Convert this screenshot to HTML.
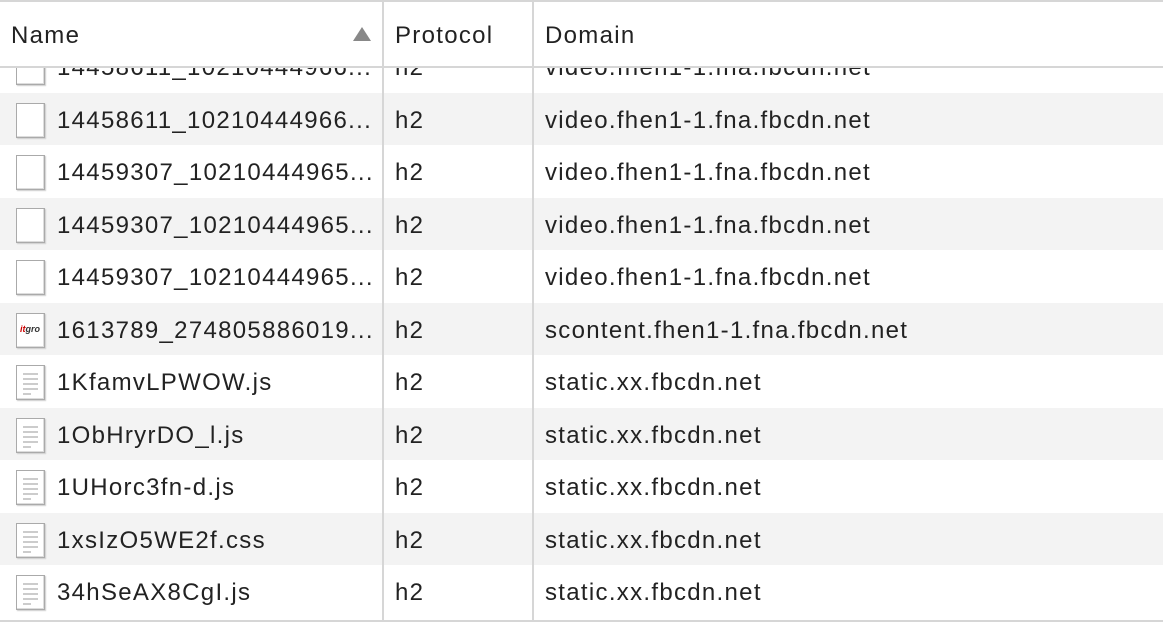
<!DOCTYPE html>
<html><head><style>
body{margin:0;width:1163px;height:625px;overflow:hidden;background:#fff;font-family:"Segoe UI","Liberation Sans",sans-serif;font-size:24px;letter-spacing:1.3px;color:#222;position:relative}
.top{position:absolute;left:0;top:0;width:1163px;height:2px;background:#d6d6d6}
.hdr{position:absolute;left:0;top:2px;width:1163px;height:64px;border-bottom:2px solid #d6d6d6;background:#fff;z-index:2}
.hdr span{position:absolute;top:20px}
.vl{position:absolute;top:2px;width:2px;height:620px;background:#d6d6d6;z-index:3}
.row{position:absolute;left:0;width:1163px;height:52.6px}
.g{background:#f3f3f3}
.row span{position:absolute;top:14px;white-space:nowrap}
.ic{position:absolute;left:16px;top:10px;width:29px;height:35px;border:1px solid #aaa;background:#fff;box-shadow:inset -1px -1px 0 #ddd, 1px 1px 1px #ccc;box-sizing:border-box}
.ic i{position:absolute;left:6px;height:2px;background:#ccc}
.bot{position:absolute;left:0;top:620px;width:1163px;height:2px;background:#d6d6d6;z-index:3}
.clip{position:absolute;left:0;top:68px;width:1163px;height:552px;overflow:hidden}
</style></head><body>
<div class="top"></div>
<div class="hdr"><span style="left:11px">Name</span>
<svg style="position:absolute;left:352px;top:24px" width="20" height="16"><polygon points="10,1 19,15 1,15" fill="#888"/></svg>
<span style="left:395px">Protocol</span><span style="left:545px">Domain</span></div>
<div class="vl" style="left:382px"></div><div class="vl" style="left:532px"></div>
<div class="clip">
<div class="row" style="top:-28px"><div class="ic"></div><span style="left:57px">14458611_10210444966...</span><span style="left:395px">h2</span><span style="left:545px">video.fhen1-1.fna.fbcdn.net</span></div>
<div class="row g" style="top:24.5px"><div class="ic"></div><span style="left:57px">14458611_10210444966...</span><span style="left:395px">h2</span><span style="left:545px">video.fhen1-1.fna.fbcdn.net</span></div>
<div class="row" style="top:77px"><div class="ic"></div><span style="left:57px">14459307_10210444965...</span><span style="left:395px">h2</span><span style="left:545px">video.fhen1-1.fna.fbcdn.net</span></div>
<div class="row g" style="top:129.5px"><div class="ic"></div><span style="left:57px">14459307_10210444965...</span><span style="left:395px">h2</span><span style="left:545px">video.fhen1-1.fna.fbcdn.net</span></div>
<div class="row" style="top:182px"><div class="ic"></div><span style="left:57px">14459307_10210444965...</span><span style="left:395px">h2</span><span style="left:545px">video.fhen1-1.fna.fbcdn.net</span></div>
<div class="row g" style="top:234.5px"><div class="ic"><b style="position:absolute;left:3px;top:10px;font-size:9px;letter-spacing:0;font-style:italic;color:#333;font-family:'Liberation Sans',sans-serif"><em style="color:#c00">it</em>gro</b></div><span style="left:57px">1613789_274805886019...</span><span style="left:395px">h2</span><span style="left:545px">scontent.fhen1-1.fna.fbcdn.net</span></div>
<div class="row" style="top:287px"><div class="ic"><i style="top:7px;width:15px"></i><i style="top:12px;width:15px"></i><i style="top:17px;width:15px"></i><i style="top:22px;width:15px"></i><i style="top:27px;width:8px"></i></div><span style="left:57px">1KfamvLPWOW.js</span><span style="left:395px">h2</span><span style="left:545px">static.xx.fbcdn.net</span></div>
<div class="row g" style="top:339.5px"><div class="ic"><i style="top:7px;width:15px"></i><i style="top:12px;width:15px"></i><i style="top:17px;width:15px"></i><i style="top:22px;width:15px"></i><i style="top:27px;width:8px"></i></div><span style="left:57px">1ObHryrDO_l.js</span><span style="left:395px">h2</span><span style="left:545px">static.xx.fbcdn.net</span></div>
<div class="row" style="top:392px"><div class="ic"><i style="top:7px;width:15px"></i><i style="top:12px;width:15px"></i><i style="top:17px;width:15px"></i><i style="top:22px;width:15px"></i><i style="top:27px;width:8px"></i></div><span style="left:57px">1UHorc3fn-d.js</span><span style="left:395px">h2</span><span style="left:545px">static.xx.fbcdn.net</span></div>
<div class="row g" style="top:444.5px"><div class="ic"><i style="top:7px;width:15px"></i><i style="top:12px;width:15px"></i><i style="top:17px;width:15px"></i><i style="top:22px;width:15px"></i><i style="top:27px;width:8px"></i></div><span style="left:57px">1xsIzO5WE2f.css</span><span style="left:395px">h2</span><span style="left:545px">static.xx.fbcdn.net</span></div>
<div class="row" style="top:497px"><div class="ic"><i style="top:7px;width:15px"></i><i style="top:12px;width:15px"></i><i style="top:17px;width:15px"></i><i style="top:22px;width:15px"></i><i style="top:27px;width:8px"></i></div><span style="left:57px">34hSeAX8CgI.js</span><span style="left:395px">h2</span><span style="left:545px">static.xx.fbcdn.net</span></div>
</div>
<div class="bot"></div>
</body></html>
